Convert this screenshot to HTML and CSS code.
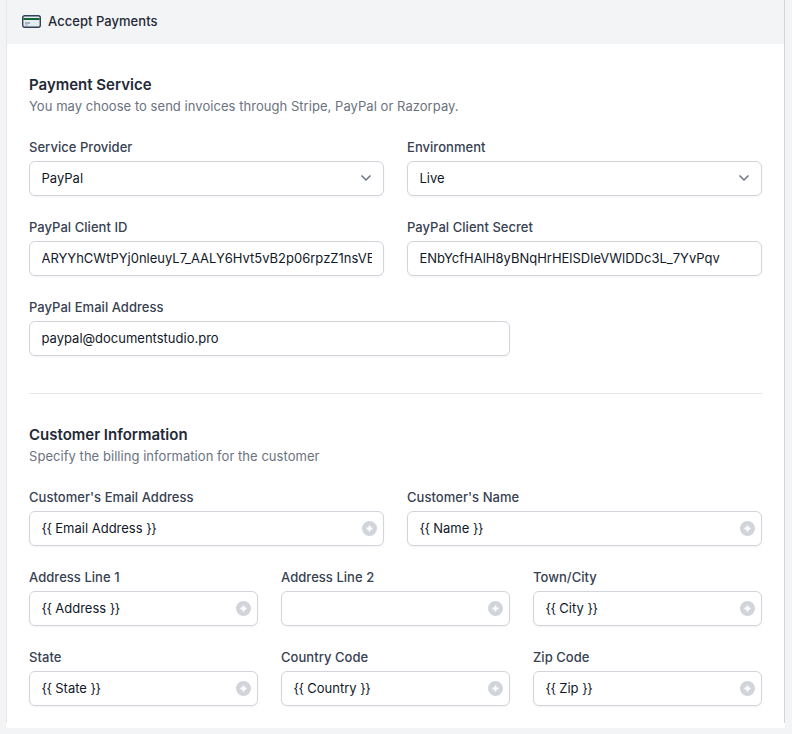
FILE: index.html
```html
<!DOCTYPE html>
<html lang="en">
<head>
<meta charset="utf-8">
<title>Accept Payments</title>
<link rel="stylesheet" href="styles.css">
</head>
<body>
<div class="card">
  <div class="frame">
  <header class="card-head">
    <svg class="card-icon" width="19" height="13" viewBox="0 0 19 13" aria-hidden="true">
      <rect x="0.7" y="0.7" width="17.600" height="11.600" rx="2" fill="#e6ebf0" stroke="#334155" stroke-width="1.400"/>
      <rect x="1.400" y="3" width="16.200" height="2" fill="#166534"/>
      <rect x="3" y="7.500" width="5" height="1" fill="#64748b"/>
      <rect x="3" y="9.500" width="3" height="1" fill="#94a3b8"/>
    </svg>
    <span class="card-title">Accept Payments</span>
  </header>
  <main class="card-body">
    <section class="section">
      <h2>Payment Service</h2>
      <p class="hint">You may choose to send invoices through Stripe, PayPal or Razorpay.</p>
      <div class="grid">
        <div class="field span3">
          <label>Service Provider</label>
          <div class="control"><span class="value">PayPal</span><svg class="chev" width="12" height="8" viewBox="0 0 12 8"><path d="M1.5 1.5 6 6l4.500-4.500" fill="none" stroke="#6b7280" stroke-width="1.5"/></svg></div>
        </div>
        <div class="field span3">
          <label>Environment</label>
          <div class="control"><span class="value">Live</span><svg class="chev" width="12" height="8" viewBox="0 0 12 8"><path d="M1.5 1.5 6 6l4.500-4.500" fill="none" stroke="#6b7280" stroke-width="1.5"/></svg></div>
        </div>
        <div class="field span3">
          <label>PayPal Client ID</label>
          <div class="control"><span class="value">ARYYhCWtPYj0nleuyL7_AALY6Hvt5vB2p06rpzZ1nsVEXqT</span></div>
        </div>
        <div class="field span3">
          <label>PayPal Client Secret</label>
          <div class="control"><span class="value">ENbYcfHAlH8yBNqHrHElSDleVWlDDc3L_7YvPqv</span></div>
        </div>
        <div class="field span4">
          <label>PayPal Email Address</label>
          <div class="control"><span class="value">paypal@documentstudio.pro</span></div>
        </div>
      </div>
    </section>
    <hr class="rule">
    <section class="section">
      <h2>Customer Information</h2>
      <p class="hint">Specify the billing information for the customer</p>
      <div class="grid">
        <div class="field span3">
          <label>Customer's Email Address</label>
          <div class="control"><span class="value"><span class="brace">{{</span> Email Address <span class="brace">}}</span></span><svg class="plus" width="15" height="15" viewBox="0 0 15 15"><circle cx="7.500" cy="7.500" r="7.500" fill="#d1d5db"/><path d="M7.500 4.500v6M4.500 7.500h6" stroke="#fff" stroke-width="1.800"/></svg></div>
        </div>
        <div class="field span3">
          <label>Customer's Name</label>
          <div class="control"><span class="value"><span class="brace">{{</span> Name <span class="brace">}}</span></span><svg class="plus" width="15" height="15" viewBox="0 0 15 15"><circle cx="7.500" cy="7.500" r="7.500" fill="#d1d5db"/><path d="M7.500 4.500v6M4.500 7.500h6" stroke="#fff" stroke-width="1.800"/></svg></div>
        </div>
        <div class="field span2">
          <label>Address Line 1</label>
          <div class="control"><span class="value"><span class="brace">{{</span> Address <span class="brace">}}</span></span><svg class="plus" width="15" height="15" viewBox="0 0 15 15"><circle cx="7.500" cy="7.500" r="7.500" fill="#d1d5db"/><path d="M7.500 4.500v6M4.500 7.500h6" stroke="#fff" stroke-width="1.800"/></svg></div>
        </div>
        <div class="field span2">
          <label>Address Line 2</label>
          <div class="control"><span class="value"></span><svg class="plus" width="15" height="15" viewBox="0 0 15 15"><circle cx="7.500" cy="7.500" r="7.500" fill="#d1d5db"/><path d="M7.500 4.500v6M4.500 7.500h6" stroke="#fff" stroke-width="1.800"/></svg></div>
        </div>
        <div class="field span2">
          <label>Town/City</label>
          <div class="control"><span class="value"><span class="brace">{{</span> City <span class="brace">}}</span></span><svg class="plus" width="15" height="15" viewBox="0 0 15 15"><circle cx="7.500" cy="7.500" r="7.500" fill="#d1d5db"/><path d="M7.500 4.500v6M4.500 7.500h6" stroke="#fff" stroke-width="1.800"/></svg></div>
        </div>
        <div class="field span2">
          <label>State</label>
          <div class="control"><span class="value"><span class="brace">{{</span> State <span class="brace">}}</span></span><svg class="plus" width="15" height="15" viewBox="0 0 15 15"><circle cx="7.500" cy="7.500" r="7.500" fill="#d1d5db"/><path d="M7.500 4.500v6M4.500 7.500h6" stroke="#fff" stroke-width="1.800"/></svg></div>
        </div>
        <div class="field span2">
          <label>Country Code</label>
          <div class="control"><span class="value"><span class="brace">{{</span> Country <span class="brace">}}</span></span><svg class="plus" width="15" height="15" viewBox="0 0 15 15"><circle cx="7.500" cy="7.500" r="7.500" fill="#d1d5db"/><path d="M7.500 4.500v6M4.500 7.500h6" stroke="#fff" stroke-width="1.800"/></svg></div>
        </div>
        <div class="field span2">
          <label>Zip Code</label>
          <div class="control"><span class="value"><span class="brace">{{</span> Zip <span class="brace">}}</span></span><svg class="plus" width="15" height="15" viewBox="0 0 15 15"><circle cx="7.500" cy="7.500" r="7.500" fill="#d1d5db"/><path d="M7.500 4.500v6M4.500 7.500h6" stroke="#fff" stroke-width="1.800"/></svg></div>
        </div>
      </div>
    </section>
  </main>
  </div>
</div>
</body>
</html>
```
FILE: styles.css
```css
* { box-sizing: border-box; }
html, body { margin: 0; padding: 0; height: 100%; }
body {
  background: #f3f4f6;
  font-family: Inter, "Liberation Sans", sans-serif;
  font-size: 13px;
  color: #111827;
  overflow: hidden;
}
.card {
  margin: 0 7px 0 6px;
  height: 728px;
  background: #fff;
}
.frame {
  height: 723px;
  border-left: 1px solid #e5e7eb;
  border-right: 1px solid #d1d5db;
  overflow: hidden;
}
.card-head {
  height: 44px;
  padding: 0 0 2px 15px;
  display: flex;
  align-items: center;
  gap: 7px;
  background: #f3f4f6;
}
.card-title { font-size: 13px; font-weight: 500; color: #1f2937; letter-spacing: .04px; }
.card-icon { flex: none; }
.card-body {
  background: #fff;
  padding: 32px 22px 0;
}
h2 {
  margin: 0;
  font-size: 15px;
  line-height: 18px;
  font-weight: 600;
  color: #1f2937;
}
.hint {
  margin: 3px 0 0;
  font-size: 13px;
  line-height: 18px;
  letter-spacing: .045px;
  color: #6b7280;
}
.grid {
  margin-top: 24px;
  display: grid;
  grid-template-columns: repeat(6, 1fr);
  column-gap: 23px;
  row-gap: 23px;
}
.span2 { grid-column: span 2; }
.span3 { grid-column: span 3; }
.span4 { grid-column: span 4; }
.field label {
  display: block;
  font-size: 13px;
  line-height: 16px;
  font-weight: 500;
  letter-spacing: .04px;
  color: #374151;
  margin-bottom: 6px;
}
.control {
  height: 35px;
  border: 1px solid #d1d5db;
  border-radius: 6px;
  background: #fff;
  padding: 0 11px 1px 12px;
  display: flex;
  align-items: center;
  gap: 8px;
  box-shadow: 0 1px 2px rgba(0,0,0,.05);
}
.value {
  flex: 1;
  min-width: 0;
  overflow: hidden;
  white-space: nowrap;
  font-size: 13px;
  color: #111827;
  margin-left: -.5px;
}
.brace { letter-spacing: -.5px; }
.chev { flex: none; margin-right: 0; }
.plus { flex: none; margin-right: -5px; }
.rule {
  margin: 37px 0 32px;
  border: 0;
  border-top: 1px solid #e5e7eb;
}
```
